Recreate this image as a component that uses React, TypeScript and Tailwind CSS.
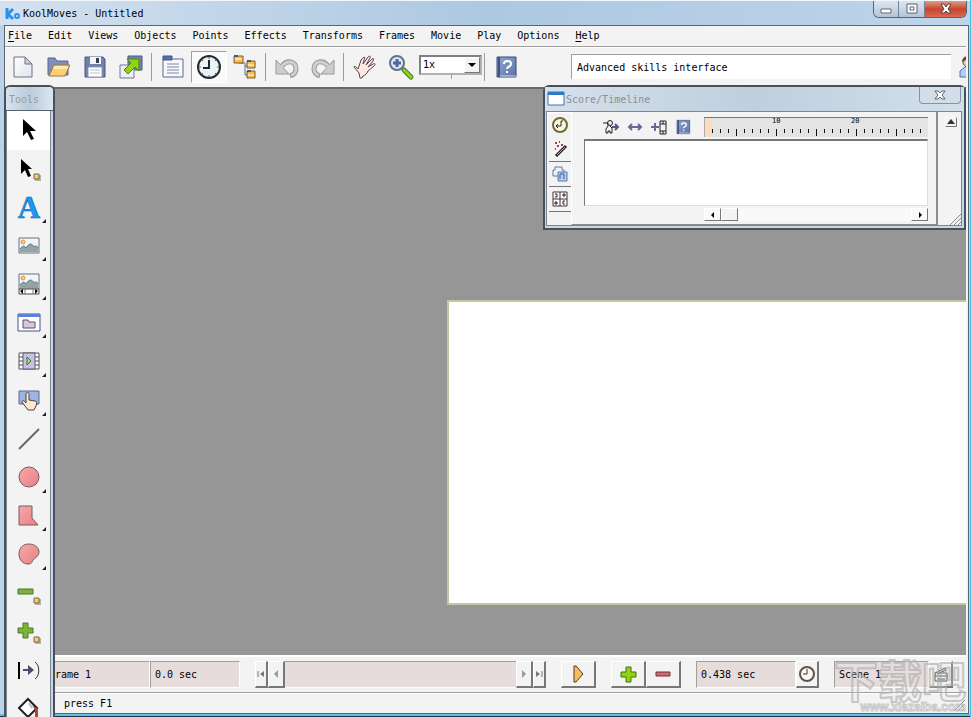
import React from "react";

type IconProps = { children: React.ReactNode; size?: string; box?: string };

function Icon({ children, size = "size-6", box = "0 0 24 24" }: IconProps) {
  return (
    <svg viewBox={box} className={`${size} shrink-0 overflow-visible`} fill="none" aria-hidden="true">
      {children}
    </svg>
  );
}

const menus = ["File", "Edit", "Views", "Objects", "Points", "Effects", "Transforms", "Frames", "Movie", "Play", "Options", "Help"];

const NewIcon = () => (
  <Icon>
    <defs>
      <linearGradient id="paper" x1="0" y1="0" x2="1" y2="1">
        <stop offset="0" stopColor="#fff" />
        <stop offset="1" stopColor="#dfe3ee" />
      </linearGradient>
    </defs>
    <path d="M3 2h11l7 7v13H3z" fill="url(#paper)" stroke="#6d7288" />
    <path d="M14 2v7h7z" fill="#c9cedb" stroke="#6d7288" />
  </Icon>
);
const OpenIcon = () => (
  <Icon>
    <path d="M1 20V3h7l2 3h11v14z" fill="#7f8fba" stroke="#596690" />
    <path d="M2 21 7 10h16l-5 11z" fill="#ffcf73" stroke="#9a7a3c" />
    <path d="M7 11h14l-1 3H6z" fill="#ffe7ae" />
  </Icon>
);
const SaveIcon = () => (
  <Icon>
    <path d="M2 2h18l2 2v18H2z" fill="#6f80ad" stroke="#4b5881" />
    <path d="M7 2h11v7H7z" fill="#f4f5fa" />
    <path d="M13 3h3v5h-3z" fill="#333b55" />
    <path d="M5 12h14v10H5z" fill="#fff" stroke="#8f99b6" />
    <path d="M7 15h10M7 18h10" stroke="#b9bfce" />
  </Icon>
);
const ExportIcon = () => (
  <Icon>
    <path d="M9 1h14v14H9z" fill="#7384ae" stroke="#4b5881" />
    <path d="M1 10h14v13H1z" fill="#eef0f6" stroke="#6d7899" />
    <path d="M8 4h12v12l-4-4-7 7-4-4 7-7z" fill="#8fd414" stroke="#4b8509" />
  </Icon>
);
const ListIcon = () => (
  <Icon>
    <path d="M2 4h20v18H2z" fill="#f7f8fc" stroke="#5d6a91" />
    <path d="M2 1h9v4H2z" fill="#5b6fae" stroke="#44558c" />
    <path d="M6 9h12M6 12h12M6 15h12M6 18h12" stroke="#8088a0" />
  </Icon>
);
const ClockIcon = () => (
  <Icon>
    <circle cx="12" cy="12" r="11" fill="#eaf3f6" stroke="#262a30" strokeWidth="2" />
    <path d="M12 5v8H6" stroke="#20242c" strokeWidth="2" />
    <path d="M12 2v2M12 20v2M2 12h2M20 12h2M5 5l1 1M18 18l1 1M19 5l-1 1M5 19l1-1" stroke="#59616c" />
  </Icon>
);
const TreeIcon = () => (
  <Icon>
    <path d="M6 8h6v12h5M12 11h5" stroke="#626b9b" />
    {["M1 1h9v7H1z", "M14 6h8v7h-8z", "M14 16h8v7h-8z"].map((d) => (
      <path key={d} d={d} fill="#f8bc4c" stroke="#7d5c2a" />
    ))}
    <path d="M1 1h4M14 6h4M14 16h4" stroke="#45559b" strokeWidth="2" />
    <path d="M2 4h7M15 10h6M15 20h6" stroke="#ffe09a" strokeWidth="2" />
  </Icon>
);
const UndoIcon = ({ flip = false }: { flip?: boolean }) => (
  <Icon>
    <g transform={flip ? "matrix(-1 0 0 1 24 0)" : undefined}>
      <path d="M1 5v14h13z" fill="#cdcdcd" stroke="#989898" />
      <path d="M7 11c5-7 14-5 14 3 0 4-3 6-6 7" stroke="#989898" strokeWidth="5" />
      <path d="M6 12c6-8 15-6 15 2 0 4-3 6-5 6" stroke="#cfcfcf" strokeWidth="3" />
    </g>
  </Icon>
);
const HandIcon = () => (
  <Icon>
    <path
      d="M7 23 6 18 1 12c0-1 2-1 4 2L8 5l3-3c1 0 1 1 0 3l-1 4 5-7c2-2 3 0 2 1l-4 7 6-6c2-1 2 0 1 2l-5 6 5-3c2-1 3 0 1 2l-6 5c-1 3-3 4-5 5l-1 2z"
      fill="#fde8e2"
      stroke="#51474b"
    />
  </Icon>
);
const ZoomIcon = () => (
  <Icon>
    <path d="m15 15 7 7" stroke="#477a12" strokeWidth="5" strokeLinecap="round" />
    <path d="m15 15 7 7" stroke="#8fd21e" strokeWidth="3" strokeLinecap="round" />
    <circle cx="8" cy="8" r="7" fill="#dbe8f6" stroke="#65708c" strokeWidth="2" />
    <path d="M8 4v8M4 8h8" stroke="#4e689c" strokeWidth="3" />
  </Icon>
);
const BookIcon = ({ size = "size-6" }: { size?: string }) => (
  <Icon size={size}>
    <defs>
      <linearGradient id="cover" x1="0" y1="0" x2="1" y2="1">
        <stop offset="0" stopColor="#93a8d0" />
        <stop offset="1" stopColor="#5a72a8" />
      </linearGradient>
    </defs>
    <path d="M3 2h19v20H3z" fill="url(#cover)" stroke="#39486f" />
    <path d="M5 2v20" stroke="#3e5286" strokeWidth="2" />
    <path d="M6 21h16" stroke="#d7deec" />
    <path d="M10 9c0-4 7-4 7 0 0 3-4 2-4 5M13 16v2" stroke="#fff" strokeWidth="2" />
  </Icon>
);

const Handle = () => (
  <>
    <path d="M18 18h6v6h-6z" fill="#b5b2ac" />
    <path d="M17 17h5v5h-5z" fill="#f8cd77" stroke="#77664a" />
  </>
);
const Scenery = () => (
  <>
    <path d="M2 4h20v15H2z" fill="#f2f6fb" stroke="#66707d" />
    <circle cx="6" cy="8" r="2" fill="#f9cf82" stroke="#d89b3e" />
    <path d="M3 18v-3c3-4 5-3 6-1 3-5 6-5 8-1 2-2 3-1 4 1v4z" fill="#98a39f" />
    <path d="M3 15c3-4 5-3 6-1 3-5 6-5 8-1 2-2 3-1 4 1" stroke="#4a7893" />
  </>
);

type Tool = { name: string; more?: boolean; art: React.ReactNode };
const tools: Tool[] = [
  { name: "Select", art: <path d="M6 1v17l4-4 4 8 3-1-4-8h6z" fill="#000" /> },
  {
    name: "Select points",
    art: (
      <>
        <path d="M4 2v15l4-4 3 7 3-1-3-7h4z" fill="#000" />
        <Handle />
      </>
    ),
  },
  {
    name: "Text",
    more: true,
    art: (
      <text x="12" y="23" textAnchor="middle" className="fill-[#169af5] stroke-[#1667a4] font-['Liberation_Serif',serif] text-[31px] font-bold [stroke-width:0.6px]">
        A
      </text>
    ),
  },
  { name: "Image", more: true, art: <Scenery /> },
  {
    name: "Scrolling image",
    more: true,
    art: (
      <>
        <g transform="translate(0 -3)"><Scenery /></g>
        <path d="M2 16h20v5H2z" fill="#fff" stroke="#484848" />
        <path d="m6 16-3 2 3 3zM18 16l3 2-3 3z" fill="#000" />
        <path d="M8 16v5M16 16v5" stroke="#777" />
      </>
    ),
  },
  {
    name: "Movie clip",
    more: true,
    art: (
      <>
        <path d="M1 3h22v17H1z" fill="#fff" stroke="#445591" />
        <path d="M1 3h22v3H1z" fill="#5b82d8" />
        <path d="M6 17V9h5l1 2h6v6z" fill="#d8c8df" stroke="#58505f" />
      </>
    ),
  },
  {
    name: "Video",
    more: true,
    art: (
      <>
        <path d="M2 3h20v16H2z" fill="#fff" stroke="#505050" />
        <path d="M6 3h12v16H6z" fill="#c8c0e4" stroke="#5d5877" />
        <path d="M2 7h4M2 11h4M2 15h4M18 7h4M18 11h4M18 15h4" stroke="#505050" />
        <path d="m10 7 4 4-4 4z" fill="#a8e070" stroke="#456d3b" />
      </>
    ),
  },
  {
    name: "Button",
    more: true,
    art: (
      <>
        <path d="M2 3h20v13H2z" fill="#9cb4e4" stroke="#56698f" />
        <path d="M9 6c0-2 3-2 3 0v6l6 1c2 0 2 2 1 5l-2 4h-6l-6-8c0-2 2-2 4 1z" fill="#ffe7d0" stroke="#4c443c" />
      </>
    ),
  },
  { name: "Line", art: <path d="M2 22 22 2" stroke="#706670" strokeWidth="2" /> },
  { name: "Ellipse", more: true, art: <circle cx="12" cy="12" r="10" fill="url(#blush)" stroke="#795b61" /> },
  { name: "Polygon", more: true, art: <path d="M2 2h13v12l6 7H2z" fill="url(#blush)" stroke="#795b61" /> },
  {
    name: "Freehand shape",
    more: true,
    art: <path d="M12 2c-6 0-10 4-10 10s4 10 9 10c4 0 4-2 5-4 2-2 6-4 6-8 0-5-5-8-10-8z" fill="url(#blush)" stroke="#795b61" />,
  },
  {
    name: "Remove point",
    art: (
      <>
        <path d="M1 8h15v5H1z" fill="#79b537" stroke="#50752e" />
        <Handle />
      </>
    ),
  },
  {
    name: "Add point",
    art: (
      <>
        <path d="M6 3h5v5h5v5h-5v5H6v-5H1V8h5z" fill="#79b537" stroke="#50752e" />
        <Handle />
      </>
    ),
  },
  {
    name: "Bend",
    art: (
      <>
        <path d="M2 4v17" stroke="#000" strokeWidth="2" />
        <path d="M6 12h6" stroke="#514770" strokeWidth="2" />
        <path d="m11 7 6 5-6 5z" fill="#514770" />
        <path d="M18 4c5 3 5 14 0 17" stroke="#333" />
      </>
    ),
  },
  {
    name: "Fill",
    art: (
      <>
        <path d="m2 11 9-9 9 9-9 9z" fill="#fff" stroke="#222" strokeWidth="2" />
        <path d="m15 8 6 4v11h-3V13z" fill="#b34734" />
        <path d="m12 6 3 5" stroke="#c2bac0" strokeWidth="2" />
      </>
    ),
  },
];

function Divider() {
  return <span className="ml-0.5 h-7 w-1 shrink-0 border-l border-[#9b9b9b]" />;
}

function ToolbarButton({ label, pressed = false, children }: { label: string; pressed?: boolean; children: React.ReactNode }) {
  return (
    <button
      aria-label={label}
      className={`flex h-8 w-9 shrink-0 items-center justify-center ${pressed ? "border border-[#a0a0a0] border-r-white border-b-white bg-[#fafafa]" : ""}`}
    >
      {children}
    </button>
  );
}

function RaisedButton({ label, width, children }: { label: string; width: string; children: React.ReactNode }) {
  return (
    <button
      aria-label={label}
      className={`flex h-[27px] ${width} shrink-0 items-center justify-center border-t border-l border-r-2 border-b-2 border-[#777] border-t-white border-l-white bg-[#f3f3f3]`}
    >
      {children}
    </button>
  );
}

function Field({ label, value, width }: { label: string; value: string; width: string }) {
  return (
    <input
      aria-label={label}
      readOnly
      value={value}
      className={`h-[27px] ${width} shrink-0 border border-[#a0a0a0] border-r-white border-b-white bg-[#e6dcdc] pl-1 outline-none`}
    />
  );
}

function ToolsPalette() {
  return (
    <aside className="absolute top-[85px] bottom-0 left-1 w-[51px] overflow-hidden rounded-t-md border-2 border-b-0 border-[#46515c] bg-[#c9d6e3]">
      <h2 className="flex h-6 items-center border-b border-[#56616b] bg-linear-to-r from-[#d9e3ee] via-[#b9cbdc] to-[#dce6f0] pt-0.5 pl-[3px] text-[#9a9a9a]">Tools</h2>
      <div className="mr-0.5 grid h-[617px] grid-rows-[repeat(16,1fr)] border-x border-[#7c8791] bg-[#f3f3f3]">
        {tools.map((tool, i) => (
          <button key={tool.name} aria-label={tool.name} className={`relative flex items-center justify-center ${i === 0 ? "bg-white" : ""}`}>
            <Icon>{tool.art}</Icon>
            {tool.more && (
              <svg viewBox="0 0 4 4" className="absolute right-1 bottom-1 size-1" aria-hidden="true">
                <path d="M4 0v4H0z" fill="#222" />
              </svg>
            )}
          </button>
        ))}
      </div>
    </aside>
  );
}

const ticks = Array.from({ length: 27 }, (_, i) => i + 2);

function Ruler() {
  return (
    <svg className="h-5 w-56 bg-[#e4e4e4]" viewBox="0 0 224 20" aria-hidden="true">
      <path d="M1 1h7v19H1z" fill="#fcdcc0" />
      <path d="M0 20V.5h224" stroke="#777" fill="none" />
      {ticks.map((n) => (
        <path key={n} d={`M${8 * n - 7.5} 12v${n % 5 === 0 ? 7 : 4}`} stroke="#111" />
      ))}
      <text x="68" y="6" className="fill-black text-[7px]">10</text>
      <text x="147" y="6" className="fill-black text-[7px]">20</text>
    </svg>
  );
}

const scoreTabs = [
  {
    name: "Timing",
    art: (
      <>
        <circle cx="8" cy="8" r="7" fill="#faf7dc" stroke="#6f6a3a" strokeWidth="2" />
        <path d="M9 4v5H4M6 7 4 9l2 2M9 4h2" stroke="#222" />
      </>
    ),
  },
  {
    name: "Effects",
    art: (
      <>
        <path d="M4 15 14 5" stroke="#222" strokeWidth="3" />
        <path d="m5 14 8-8" stroke="#c9bd6a" />
        <path d="M3 2h2M7 1h1M5 5h2M9 4h2M3 8h1" stroke="#a33a44" strokeWidth="2" />
      </>
    ),
  },
  {
    name: "Sound",
    art: (
      <>
        <path d="M1 4h2V1h7v3h2v6H1z" fill="#eef2f8" stroke="#60779f" />
        <path d="M6 6h9v9H6z" fill="#b9cdee" stroke="#5b78aa" />
        <path d="M8 13v-5h4v5" stroke="#345a9d" />
      </>
    ),
  },
  {
    name: "Actions",
    art: (
      <>
        <path d="M1 1h14v14H1zM8 1v14M1 8h14" fill="#fff" stroke="#3d3330" />
        <path d="M3 3h2v3H3M11 3h2v2h-2zM3 11h2v2H3zM13 10h-2v3h2" stroke="#241c1a" />
      </>
    ),
  },
];

function ScoreTimeline() {
  return (
    <section className="absolute top-[85px] right-1 flex h-[145px] w-[423px] flex-col rounded-t-md border-2 border-[#46515c] bg-[#c9d6e3]">
      <header className="flex h-6 items-center bg-linear-to-r from-[#d5e0eb] via-[#bfcfde] to-[#d3dfeb] pl-[3px] text-[#8b8f96]">
        <Icon size="size-4" box="0 0 16 16">
          <path d="M0 1h16v13H0z" fill="#fff" stroke="#3c75b5" />
          <path d="M0 1h16v3H0z" fill="#2d79c9" />
        </Icon>
        <h2 className="ml-0.5 grow pt-0.5">Score/Timeline</h2>
        <button aria-label="Close timeline" className="mr-[3px] flex h-[17px] w-[42px] items-center justify-center self-start rounded-b border border-t-0 border-[#8793a0] bg-[#d3dde8]">
          <Icon size="size-3" box="0 0 12 12">
            <path d="M1 2h3l2 2 2-2h3L8 6l3 4H8L6 8l-2 2H1l3-4z" fill="#fff" stroke="#59616b" />
          </Icon>
        </button>
      </header>
      <div className="mr-0.5 mb-0.5 ml-px flex grow border border-[#7c8791] bg-[#f3f3f3]">
        <nav className="flex w-6 flex-col">
          {scoreTabs.map((tab, i) => (
            <button
              key={tab.name}
              aria-label={tab.name}
              className={`flex h-[25px] items-center justify-center ${i === 0 ? "border-t border-l border-white" : "ml-0.5 border-b border-[#777]"}`}
            >
              <Icon size="size-4" box="0 0 16 16">{tab.art}</Icon>
            </button>
          ))}
        </nav>
        <div className="flex grow flex-col border-r-2 border-b border-l border-[#8c8c8c] border-l-white pr-2 pl-3">
          <div className="flex items-center justify-between pt-[5px] pl-[19px]">
            <div className="flex items-center gap-2">
              <button aria-label="Tween shape">
                <Icon size="size-4" box="0 0 16 16">
                  <circle cx="7" cy="4" r="2.5" stroke="#222" />
                  <path d="M0 4h5v3L3 10v4h2v-2h2v2h2V9L7 7" stroke="#222" />
                  <path d="M9 8h5M12 5l3 3-3 3" stroke="#5d5289" strokeWidth="2" />
                </Icon>
              </button>
              <button aria-label="Stretch">
                <Icon size="size-4" box="0 0 16 16">
                  <path d="M3 8h10M5 5 2 8l3 3M11 5l3 3-3 3" stroke="#6e6496" strokeWidth="2" />
                </Icon>
              </button>
              <button aria-label="Insert frame">
                <Icon size="size-4" box="0 0 16 16">
                  <path d="M0 8h8M4 4v8" stroke="#6e6496" strokeWidth="2" />
                  <path d="M9 2h6v13H9zM9 5h6M9 12h6M12 2v3M12 12v3" stroke="#222" />
                </Icon>
              </button>
              <button aria-label="Timeline help">
                <BookIcon size="size-4" />
              </button>
            </div>
            <Ruler />
          </div>
          <div className="mt-0.5 h-[67px] border-t-2 border-r border-b border-l border-[#777] border-r-[#ddd] border-b-[#ddd] bg-white" />
          <div className="mt-0.5 ml-auto flex h-[13px] w-56 bg-[#f9f9f9]">
            <button aria-label="Scroll left" className="flex w-[17px] items-center justify-center border border-[#777] border-t-white border-l-white">
              <Icon size="size-2" box="0 0 8 8"><path d="M5 1v6L2 4z" fill="#000" /></Icon>
            </button>
            <button aria-label="Scroll thumb" className="w-[17px] border border-[#777] border-t-white border-l-white bg-[#f3f3f3]" />
            <button aria-label="Scroll right" className="ml-auto flex w-[17px] items-center justify-center border border-[#777] border-t-white border-l-white">
              <Icon size="size-2" box="0 0 8 8"><path d="M3 1v6l3-3z" fill="#000" /></Icon>
            </button>
          </div>
        </div>
        <div className="flex w-[23px] flex-col items-end justify-between">
          <button aria-label="Collapse" className="mt-[5px] mr-1 flex h-[10px] w-3 items-center justify-center border border-[#777] border-t-white border-l-white">
            <Icon size="size-2" box="0 0 8 8"><path d="m4 1 4 5H0z" fill="#333" /></Icon>
          </button>
          <Icon size="size-3" box="0 0 12 12"><path d="M1 12 12 1M5 12l7-7M9 12l3-3" stroke="#8a8a8a" /></Icon>
        </div>
      </div>
    </section>
  );
}

export default function App() {
  return (
    <div className="relative flex h-screen w-full flex-col overflow-hidden border-r border-[#3fc3e8] bg-[#bdd2e8] font-['DejaVu_Sans_Mono','Liberation_Mono',monospace] text-[10px] leading-4 text-black">
      <header className="flex h-[25px] shrink-0 border-t border-[#f2f7fb] bg-linear-to-r from-[#d3e1ef] via-[#adc8e2] to-[#bed4ea] pl-[5px]">
        <div className="flex grow items-center gap-0.5 pt-0.5">
          <Icon size="size-4" box="0 0 16 16">
            <path d="M2 2v11M8 3 3 8l5 5" stroke="#2d93e8" strokeWidth="3" />
            <circle cx="12" cy="10" r="3" fill="#2d93e8" />
            <circle cx="12" cy="10" r="1" fill="#c5e2fa" />
          </Icon>
          <h1>KoolMoves - Untitled</h1>
        </div>
        <div className="mr-[3px] flex h-[17px] overflow-hidden rounded-b-md border border-t-0 border-[#536474]">
          <button aria-label="Minimize" className="flex w-[25px] items-center justify-center border-r border-[#71839a] bg-linear-to-b from-[#dce6f1] to-[#b2c4d7]">
            <Icon size="size-4" box="0 0 16 16"><path d="M3 8h10v4H3z" fill="#fff" stroke="#626b75" /></Icon>
          </button>
          <button aria-label="Maximize" className="flex w-[26px] items-center justify-center border-r border-[#71839a] bg-linear-to-b from-[#dce6f1] to-[#b2c4d7]">
            <Icon size="size-4" box="0 0 16 16"><path d="M3 3h10v9H3zM6 6h4v3H6z" fill="#fff" stroke="#59616b" /></Icon>
          </button>
          <button aria-label="Close" className="flex w-[41px] items-center justify-center bg-linear-to-b from-[#e09a88] via-[#c8432c] to-[#d66a50]">
            <Icon size="size-4" box="0 0 16 16"><path d="M3 3h3l2 3 2-3h3l-3 5 3 4h-3L8 10l-2 2H3l3-4z" fill="#fff" stroke="#59414a" /></Icon>
          </button>
        </div>
      </header>

      <main className="mr-px ml-1 flex min-h-0 grow flex-col border border-[#596673] bg-[#f3f3f3] pr-0.5">
        <nav className="flex h-[21px] shrink-0 items-center gap-4 border-b border-[#a0a0a0] pl-[3px]">
          {menus.map((m) => (
            <button key={m} className="whitespace-nowrap">
              {m === "File" || m === "Help" ? (
                <>
                  <span className="underline underline-offset-2">{m[0]}</span>
                  {m.slice(1)}
                </>
              ) : (
                m
              )}
            </button>
          ))}
        </nav>

        <div className="flex h-10 shrink-0 items-center border-t border-white pb-0.5">
          <ToolbarButton label="New"><NewIcon /></ToolbarButton>
          <ToolbarButton label="Open"><OpenIcon /></ToolbarButton>
          <ToolbarButton label="Save"><SaveIcon /></ToolbarButton>
          <ToolbarButton label="Export"><ExportIcon /></ToolbarButton>
          <Divider />
          <ToolbarButton label="Properties"><ListIcon /></ToolbarButton>
          <ToolbarButton label="Timeline" pressed><ClockIcon /></ToolbarButton>
          <ToolbarButton label="Hierarchy"><TreeIcon /></ToolbarButton>
          <Divider />
          <ToolbarButton label="Undo"><UndoIcon /></ToolbarButton>
          <ToolbarButton label="Redo"><UndoIcon flip /></ToolbarButton>
          <Divider />
          <ToolbarButton label="Pan"><HandIcon /></ToolbarButton>
          <ToolbarButton label="Zoom"><ZoomIcon /></ToolbarButton>
          <div className="relative mb-1 h-5 w-[63px] shrink-0">
            <select aria-label="Zoom level" className="block h-5 w-full appearance-none rounded-none border-2 border-[#808080] border-r-[#b0b0b0] border-b-[#b0b0b0] bg-white pl-0.5 leading-4">
              <option>1x</option>
            </select>
            <span className="pointer-events-none absolute top-0.5 right-0.5 flex h-4 w-4 items-center justify-center border border-[#777] border-t-white border-l-white bg-[#f3f3f3]">
              <Icon size="size-2" box="0 0 8 8"><path d="M0 2h8L4 6z" fill="#000" /></Icon>
            </span>
            <span className="absolute top-5 left-1/2 h-1 border-l border-[#a0a0a0]" />
          </div>
          <Divider />
          <ToolbarButton label="Help topics"><BookIcon /></ToolbarButton>
          <input
            aria-label="Interface level"
            readOnly
            value="Advanced skills interface"
            className="ml-[47px] h-[25px] min-w-0 grow border-t border-l border-[#a0a0a0] bg-white pl-[5px] outline-none"
          />
          <button aria-label="User" className="flex w-[15px] shrink-0 overflow-hidden pl-2">
            <Icon>
              <path d="M1 22v-6l5-4h8l5 4v6z" fill="#b5cdf2" stroke="#5371a5" />
              <circle cx="9" cy="7" r="5" fill="#f3cda8" stroke="#5e4939" />
              <path d="M3 7c0-8 12-8 12 0L9 4z" fill="#5e4939" />
            </Icon>
          </button>
        </div>

        <div className="flex min-h-0 grow overflow-hidden border-t-2 border-[#696969] bg-[#969696] pt-[211px] pl-[442px]">
          <div className="h-[305px] grow border-2 border-r-0 border-[#c5c5a0] bg-white" />
        </div>

        <div className="flex h-[38px] shrink-0 items-center border-t-2 border-b border-[#a0a0a0] border-t-white pl-[39px]">
          <Field label="Frame" value="frame 1" width="w-[106px]" />
          <Field label="Time" value="0.0 sec" width="w-[90px]" />
          <div className="ml-[15px] flex min-w-0 grow">
            <RaisedButton label="First frame" width="w-[13px]">
              <Icon size="size-2" box="0 0 8 8"><path d="M1 1v6" stroke="#777" /><path d="M7 1v6L3 4z" fill="#777" /></Icon>
            </RaisedButton>
            <RaisedButton label="Previous frame" width="w-[17px]">
              <Icon size="size-2" box="0 0 8 8"><path d="M6 0v8L2 4z" fill="#999" /></Icon>
            </RaisedButton>
            <div className="h-[27px] min-w-0 grow border-t border-b border-[#a0a0a0] border-b-white bg-[#e6dcdc]" />
            <RaisedButton label="Next frame" width="w-[17px]">
              <Icon size="size-2" box="0 0 8 8"><path d="M2 0v8l4-4z" fill="#999" /></Icon>
            </RaisedButton>
            <RaisedButton label="Last frame" width="w-[13px]">
              <Icon size="size-2" box="0 0 8 8"><path d="M7 1v6" stroke="#777" /><path d="M1 1v6l4-3z" fill="#777" /></Icon>
            </RaisedButton>
          </div>
          <div className="mx-[15px] flex">
            <RaisedButton label="Play" width="w-[35px]">
              <Icon size="size-5" box="0 0 20 20"><path d="M6 2h2l7 8-7 8H6z" fill="#f8bd5a" stroke="#4c3a23" /></Icon>
            </RaisedButton>
          </div>
          <RaisedButton label="Add frame" width="w-[35px]">
            <Icon size="size-5" box="0 0 20 20"><path d="M8 3h5v5h5v5h-5v5H8v-5H3V8h5z" fill="#93d010" stroke="#44720c" /></Icon>
          </RaisedButton>
          <RaisedButton label="Delete frame" width="w-[35px]">
            <Icon size="size-5" box="0 0 20 20"><path d="M3 8h14v4H3z" fill="#cf6b6e" stroke="#713437" /></Icon>
          </RaisedButton>
          <div className="ml-[15px] flex">
            <Field label="Duration" value="0.438 sec" width="w-[100px]" />
            <RaisedButton label="Set duration" width="w-[23px]">
              <Icon size="size-4" box="0 0 16 16">
                <circle cx="8" cy="8" r="7" fill="#fbf7f3" stroke="#5e554e" strokeWidth="2" />
                <path d="M8 3v5H4" stroke="#3d3733" />
              </Icon>
            </RaisedButton>
          </div>
          <div className="mr-[13px] ml-[15px] flex">
            <Field label="Scene" value="Scene 1" width="w-[95px]" />
            <RaisedButton label="Scene settings" width="w-[24px]">
              <Icon size="size-4" box="0 0 16 16">
                <path d="M2 7h12v8H2zM2 10h12M4 13h8" fill="#fff" stroke="#333" />
                <path d="m2 7 10-5 1 2L4 8" fill="#e6e0b0" stroke="#333" />
              </Icon>
            </RaisedButton>
          </div>
        </div>

        <footer className="flex h-5 shrink-0 items-center justify-between border-t border-white pl-[59px]">
          <span>press F1</span>
          <Icon size="size-4" box="0 0 16 16"><path d="M4 15 15 4M8 15l7-7M12 15l3-3" stroke="#8a8a8a" /></Icon>
        </footer>
      </main>
      <div className="h-[3px] shrink-0 border-b border-[#17364a] bg-[#62bfe0]" />

      <ScoreTimeline />
      <ToolsPalette />

      <div className="pointer-events-none absolute right-1 bottom-1 flex flex-col items-end opacity-70">
        <span className="font-['Noto_Sans_CJK_SC',sans-serif] text-[44px] leading-[44px] font-bold text-[#ededed]/30 [-webkit-text-stroke:2px_#b4b4b4]">下载吧</span>
        <span className="font-['Liberation_Sans',sans-serif] text-xs leading-3 font-bold text-white [-webkit-text-stroke:1px_#b4b4b4]">www.xiazaiba.com</span>
      </div>

      <svg className="absolute size-0" aria-hidden="true">
        <defs>
          <linearGradient id="blush" x1="0" y1="0" x2="1" y2="1">
            <stop offset="0" stopColor="#f7a9a8" />
            <stop offset="1" stopColor="#e87f82" />
          </linearGradient>
        </defs>
      </svg>
    </div>
  );
}
